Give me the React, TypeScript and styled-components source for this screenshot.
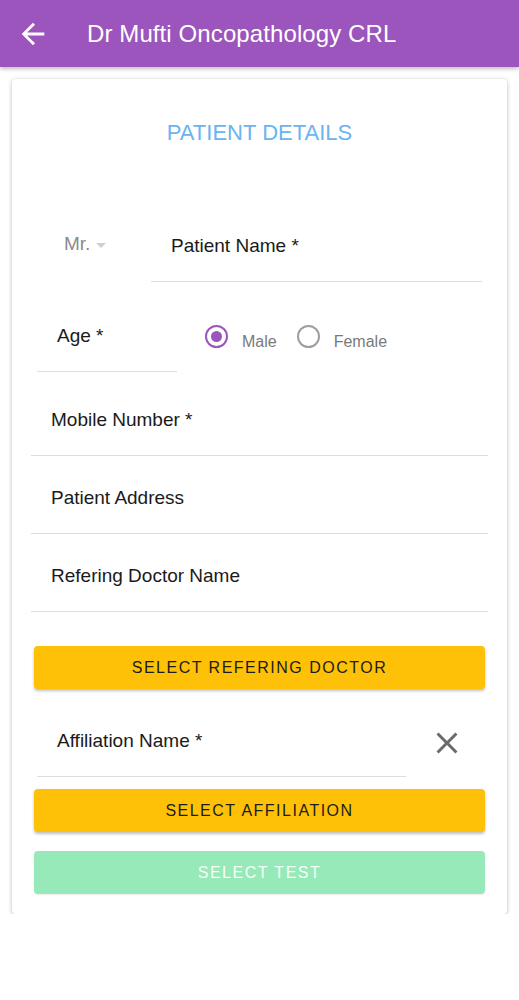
import React, { useState } from 'react';
import styled, { createGlobalStyle } from 'styled-components';

const GlobalStyle = createGlobalStyle`
  html, body {
    margin: 0;
    padding: 0;
    background: #ffffff;
    font-family: "Liberation Sans", Arial, sans-serif;
  }
`;

const Header = styled.header`
  height: 67px;
  background: #9b55bd;
  display: flex;
  align-items: center;
  box-shadow: 0 2px 4px rgba(0, 0, 0, 0.25);
  position: relative;
  z-index: 1;
`;

const BackButton = styled.div`
  width: 34px;
  height: 34px;
  margin-left: 16px;
  display: flex;
  align-items: center;
  justify-content: center;
`;

const Title = styled.h1`
  margin: 0 0 0 37px;
  font-size: 24px;
  font-weight: 400;
  color: #ffffff;
  letter-spacing: 0.1px;
`;

const Card = styled.div`
  margin: 12px 12px 0;
  padding: 42px 19px 20px;
  background: #ffffff;
  border-radius: 4px;
  box-shadow: 0 1px 4px rgba(0, 0, 0, 0.28);
`;

const Heading = styled.h2`
  margin: 0 0 59px;
  text-align: center;
  font-size: 22px;
  line-height: 24px;
  font-weight: 400;
  color: #6ab4ef;
`;

const Row = styled.div<{ $top?: number; $inset?: number }>`
  display: flex;
  align-items: stretch;
  margin-top: ${(p) => p.$top ?? 0}px;
  margin-left: ${(p) => p.$inset ?? 0}px;
`;

const Field = styled.div<{ $width?: number; $gap?: number }>`
  box-sizing: border-box;
  height: 78px;
  padding: 6px 20px 0;
  display: flex;
  align-items: center;
  ${(p) => (p.$width ? `width: ${p.$width}px; flex: none;` : 'flex: 1;')}
  margin-right: ${(p) => p.$gap ?? 0}px;
  border-bottom: 1px solid #dedede;
  font-size: 19px;
  color: #1a1a1a;
`;

const Salutation = styled.div`
  width: 120px;
  flex: none;
  box-sizing: border-box;
  padding: 2px 0 0 33px;
  display: flex;
  align-items: center;
  gap: 6px;
  font-size: 19px;
  color: #8a8a8a;
`;

const Caret = styled.span`
  width: 0;
  height: 0;
  border-left: 5px solid transparent;
  border-right: 5px solid transparent;
  border-top: 5px solid #cfcfcf;
  margin-top: 2px;
`;

const RadioGroup = styled.div`
  display: flex;
  align-items: center;
  padding: 6px 0 0 28px;
`;

const RadioOption = styled.label`
  display: flex;
  align-items: center;
  margin-right: 20px;
  font-size: 16px;
  color: #7a7a7a;
  cursor: pointer;
`;

const RadioRing = styled.span<{ $on: boolean }>`
  box-sizing: border-box;
  width: 23px;
  height: 23px;
  border-radius: 50%;
  border: 2.5px solid ${(p) => (p.$on ? '#9b55bd' : '#9e9e9e')};
  display: flex;
  align-items: center;
  justify-content: center;
  margin-right: 14px;
  &::after {
    content: '';
    width: 11px;
    height: 11px;
    border-radius: 50%;
    background: ${(p) => (p.$on ? '#9b55bd' : 'transparent')};
  }
`;

const RadioText = styled.span`
  margin-top: 12px;
`;

const ClearButton = styled.div`
  width: 82px;
  display: flex;
  align-items: center;
  justify-content: center;
  padding-top: 10px;
`;

const ActionButton = styled.button<{ $tone: 'amber' | 'mint'; $top: number }>`
  display: block;
  box-sizing: border-box;
  width: calc(100% - 6px);
  height: 43px;
  margin: ${(p) => p.$top}px 3px 0;
  border: none;
  border-radius: 4px;
  font-family: "Liberation Sans", Arial, sans-serif;
  font-size: 16px;
  letter-spacing: 1.5px;
  background: ${(p) => (p.$tone === 'amber' ? '#ffc107' : '#98e9b9')};
  color: ${(p) => (p.$tone === 'amber' ? '#1c1c1c' : '#f4fff8')};
  box-shadow: ${(p) =>
    p.$tone === 'amber'
      ? '0 2px 3px rgba(0, 0, 0, 0.25)'
      : '0 1px 2px rgba(0, 0, 0, 0.08)'};
`;

const ArrowIcon = () => (
  <svg width="34" height="34" viewBox="0 0 24 24" fill="#ffffff">
    <path d="M20 11H7.83l5.59-5.59L12 4l-8 8 8 8 1.41-1.41L7.83 13H20v-2z" />
  </svg>
);

const CloseIcon = () => (
  <svg width="36" height="36" viewBox="0 0 24 24" fill="#6b6b6b">
    <path d="M19 6.41L17.59 5 12 10.59 6.41 5 5 6.41 10.59 12 5 17.59 6.41 19 12 13.41 17.59 19 19 17.59 13.41 12z" />
  </svg>
);

export default function App() {
  const [gender, setGender] = useState<'Male' | 'Female'>('Male');

  return (
    <>
      <GlobalStyle />
      <Header>
        <BackButton>
          <ArrowIcon />
        </BackButton>
        <Title>Dr Mufti Oncopathology CRL</Title>
      </Header>

      <Card>
        <Heading>PATIENT DETAILS</Heading>

        <Row>
          <Salutation>
            Mr. <Caret />
          </Salutation>
          <Field $gap={6}>Patient Name *</Field>
        </Row>

        <Row $top={12} $inset={6}>
          <Field $width={140}>Age *</Field>
          <RadioGroup>
            {(['Male', 'Female'] as const).map((g) => (
              <RadioOption key={g} onClick={() => setGender(g)}>
                <RadioRing $on={gender === g} />
                <RadioText>{g}</RadioText>
              </RadioOption>
            ))}
          </RadioGroup>
        </Row>

        <Row $top={6}>
          <Field>Mobile Number *</Field>
        </Row>
        <Row>
          <Field>Patient Address</Field>
        </Row>
        <Row>
          <Field>Refering Doctor Name</Field>
        </Row>

        <ActionButton $tone="amber" $top={34}>SELECT REFERING DOCTOR</ActionButton>

        <Row $top={10} $inset={6}>
          <Field>Affiliation Name *</Field>
          <ClearButton>
            <CloseIcon />
          </ClearButton>
        </Row>

        <ActionButton $tone="amber" $top={12}>SELECT AFFILIATION</ActionButton>
        <ActionButton $tone="mint" $top={19}>SELECT TEST</ActionButton>
      </Card>
    </>
  );
}
